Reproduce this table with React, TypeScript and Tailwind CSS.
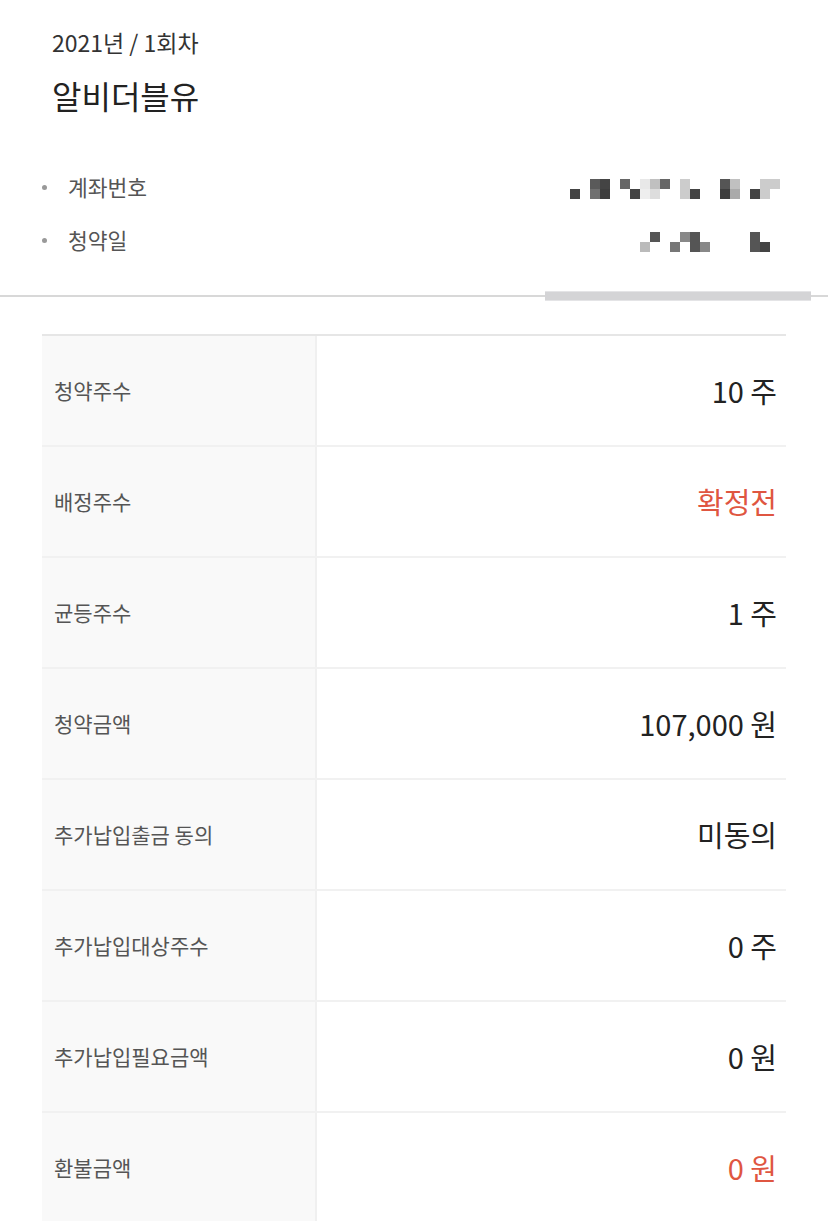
import React from 'react'

const font = { fontFamily: '"Noto Sans CJK KR", "Noto Sans", sans-serif' }

// mosaic blocks hiding private values: [x, y, colour]
const accountBlocks: [number, number, string][] = [
    [20, 0, '#5a5a5a'], [30, 0, '#444'], [50, 0, '#666'], [70, 0, '#e8e8e8'], [80, 0, '#c0c0c0'],
    [90, 0, '#666'], [110, 0, '#ccc'], [150, 0, '#555'], [160, 0, '#c0c0c0'], [190, 0, '#ccc'], [200, 0, '#ccc'],
    [0, 10, '#444'], [20, 10, '#707070'], [30, 10, '#3e3e3e'], [60, 10, '#444'], [70, 10, '#eee'],
    [80, 10, '#ddd'], [110, 10, '#ccc'], [120, 10, '#444'], [150, 10, '#3e3e3e'], [160, 10, '#aaa'],
    [180, 10, '#444'], [190, 10, '#ccc'],
]
const dateBlocks: [number, number, string][] = [
    [80, 0, '#555'], [110, 0, '#888'], [120, 0, '#555'], [180, 0, '#555'],
    [70, 10, '#bbb'], [100, 10, '#777'], [120, 10, '#555'], [130, 10, '#888'], [180, 10, '#555'], [190, 10, '#444'],
]

function Mosaic({ blocks }: { blocks: [number, number, string][] }) {
    return (
        <svg width="210" height="20" viewBox="0 0 210 20" className="block">
            {blocks.map(([x, y, c], i) => (
                <rect key={i} x={x} y={y} width="10" height="10" fill={c} />
            ))}
        </svg>
    )
}

const rows: { label: string; value: string; red?: boolean }[] = [
    { label: '청약주수', value: '10 주' },
    { label: '배정주수', value: '확정전', red: true },
    { label: '균등주수', value: '1 주' },
    { label: '청약금액', value: '107,000 원' },
    { label: '추가납입출금 동의', value: '미동의' },
    { label: '추가납입대상주수', value: '0 주' },
    { label: '추가납입필요금액', value: '0 원' },
    { label: '환불금액', value: '0 원', red: true },
]

export default function App() {
    return (
        <div className="w-[828px] h-[1221px] overflow-hidden bg-white" style={font}>
            {/* Header */}
            <div className="px-[52px] pt-[26px]">
                <div className="text-[23px] leading-[32px] text-[#333]">2021년 / 1회차</div>
                <div className="mt-[15px] text-[32px] leading-[44px] text-[#222]">알비더블유</div>
            </div>

            {/* Info list */}
            <ul className="mt-[55px] pl-[42px] pr-[48px] flex flex-col gap-[23px]">
                <li className="flex items-center h-[30px]">
                    <span className="w-[5px] h-[5px] rounded-full bg-[#999]" />
                    <span className="ml-[21px] text-[21.5px] text-[#555]">계좌번호</span>
                    <span className="ml-auto mt-[3px]"><Mosaic blocks={accountBlocks} /></span>
                </li>
                <li className="flex items-center h-[30px]">
                    <span className="w-[5px] h-[5px] rounded-full bg-[#999]" />
                    <span className="ml-[21px] text-[21.5px] text-[#555]">청약일</span>
                    <span className="ml-auto mt-[3px]"><Mosaic blocks={dateBlocks} /></span>
                </li>
            </ul>

            {/* Divider with indicator */}
            <div className="relative mt-[40px] h-[2px] bg-[#d8d8d8]">
                <div className="absolute left-[545px] top-[-4px] w-[266px] h-[10px] bg-[#d4d4d6] border-y border-[#e4e4e6]" />
            </div>

            {/* Detail table */}
            <div className="mx-[42px] mt-[37px] border-t-2 border-[#e6e6e6]">
                {rows.map(r => (
                    <div key={r.label} className="flex h-[111px] border-b-2 border-[#f1f1f1]">
                        <div className="w-[275px] bg-[#f9f9f9] border-r-2 border-[#f0f0f0] flex items-center pl-[12px] text-[21px] text-[#555]">
                            {r.label}
                        </div>
                        <div className={`flex-1 flex items-center justify-end pr-[9px] text-[29px] ${r.red ? 'text-[#df5641]' : 'text-[#222]'}`}>
                            {r.value}
                        </div>
                    </div>
                ))}
            </div>
        </div>
    )
}
